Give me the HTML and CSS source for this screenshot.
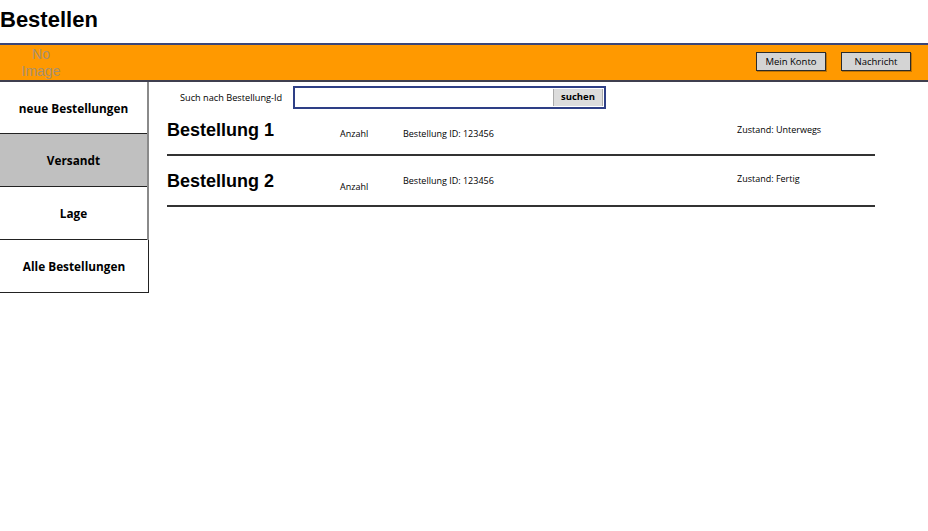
FILE: index.html
```html
<!DOCTYPE html>
<html lang="de">
<head>
<meta charset="utf-8">
<title>Bestellen</title>
<link rel="stylesheet" href="styles.css">
</head>
<body>
<h1 class="title">Bestellen</h1>
<header class="topbar">
  <div class="logo">No<br>Image</div>
  <div class="actions">
    <button class="btn">Mein Konto</button>
    <button class="btn">Nachricht</button>
  </div>
</header>
<div class="main">
  <nav class="sidebar">
    <div class="nav-item">neue Bestellungen</div>
    <div class="nav-item active">Versandt</div>
    <div class="nav-item">Lage</div>
    <div class="nav-item last">Alle Bestellungen</div>
  </nav>
  <section class="content">
    <div class="search">
      <span class="search-label">Such nach Bestellung-Id</span>
      <div class="search-box">
        <span class="search-input"></span>
        <span class="search-btn">suchen</span>
      </div>
    </div>
    <div class="order">
      <div class="order-name">Bestellung 1</div>
      <div class="order-qty">Anzahl</div>
      <div class="order-id">Bestellung ID: 123456</div>
      <div class="order-state">Zustand: Unterwegs</div>
    </div>
    <div class="order second">
      <div class="order-name">Bestellung 2</div>
      <div class="order-qty low">Anzahl</div>
      <div class="order-id">Bestellung ID: 123456</div>
      <div class="order-state">Zustand: Fertig</div>
    </div>
  </section>
</div>
</body>
</html>
```
FILE: styles.css
```css
* { box-sizing: border-box; }
body {
  margin: 0;
  background: #fff;
  font-family: "Liberation Sans", Arial, sans-serif;
  color: #000;
}
.title {
  margin: 0;
  height: 43px;
  padding-top: 7px;
  font-size: 22px;
  line-height: 26px;
  font-weight: bold;
}
.topbar {
  height: 39px;
  background: #ff9900;
  border-top: 2px solid #3a4679;
  border-bottom: 2px solid #3f3f4f;
  display: flex;
  align-items: center;
  justify-content: space-between;
}
.logo {
  width: 82px;
  text-align: center;
  font-size: 14px;
  line-height: 17px;
  color: #a69070;
}
.actions {
  display: flex;
  gap: 15px;
  margin-right: 17px;
  margin-top: -3px;
}
.btn {
  width: 70px;
  height: 19px;
  padding: 0;
  background: #d4d4d4;
  border: 1px solid #2b2b2b;
  box-shadow: 1px 1px 0 rgba(0,0,0,0.25);
  font-family: "Open Sans", "DejaVu Sans", sans-serif;
  font-size: 9.5px;
  color: #000;
}
.main {
  display: flex;
  align-items: flex-start;
}
.sidebar {
  width: 149px;
  border-right: 2px solid #8a8a8a;
  display: flex;
  flex-direction: column;
}
.nav-item {
  height: 53px;
  border-bottom: 1px solid #222;
  display: flex;
  align-items: center;
  justify-content: center;
  font-family: "Open Sans", "DejaVu Sans", sans-serif;
  font-weight: bold;
  font-size: 11.8px;
  background: #fff;
}
.nav-item:first-child { height: 52px; }
.nav-item.active { background: #c0c0c0; }
.nav-item.last {
  border-right: 1px solid #222;
  margin-right: -2px;
}
.content {
  width: 708px;
  margin-left: 18px;
}
.search {
  display: flex;
  align-items: center;
  margin-top: 4px;
  margin-left: 13px;
}
.search-label {
  width: 113px;
  font-family: "Open Sans", "DejaVu Sans", sans-serif;
  font-size: 9.2px;
}
.search-box {
  width: 313px;
  height: 23px;
  border: 2px solid #2e3f86;
  display: flex;
  align-items: stretch;
  padding: 1px;
}
.search-input { flex: 1; }
.search-btn {
  width: 50px;
  background: #dcdcdc;
  border-left: 1px solid #aaa;
  border-right: 1px solid #aaa;
  font-family: "Open Sans", "DejaVu Sans", sans-serif;
  font-weight: bold;
  font-size: 9.5px;
  display: flex;
  align-items: center;
  justify-content: center;
  padding-bottom: 3px;
}
.order {
  height: 47px;
  border-bottom: 2px solid #333;
  display: flex;
  align-items: flex-start;
  font-family: "Open Sans", "DejaVu Sans", sans-serif;
  font-size: 9px;
}
.order.second { height: 51px; }
.order-name {
  width: 173px;
  font-family: "Liberation Sans", Arial, sans-serif;
  font-weight: bold;
  font-size: 18px;
  line-height: 20px;
  margin-top: 11px;
}
.order.second .order-name { margin-top: 15px; }
.order-qty {
  width: 63px;
  margin-top: 18px;
}
.order-qty.low { margin-top: 24px; }
.order-id {
  width: 334px;
  margin-top: 18px;
}
.order-state {
  margin-top: 14px;
}
.order.second .order-state { margin-top: 16px; }
```
